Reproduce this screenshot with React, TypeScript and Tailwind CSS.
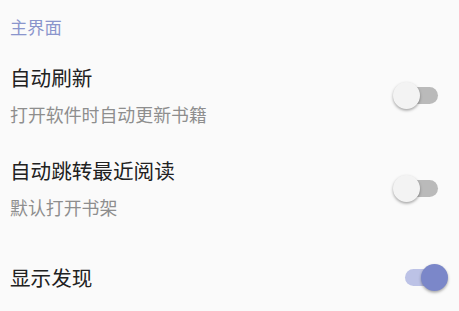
import React, { useState } from 'react';

type Pref = {
  key: string;
  title: string;
  summary?: string;
  on: boolean;
};

const initialPrefs: Pref[] = [
  { key: 'autoRefresh', title: '自动刷新', summary: '打开软件时自动更新书籍', on: false },
  { key: 'autoJump', title: '自动跳转最近阅读', summary: '默认打开书架', on: false },
  { key: 'showDiscover', title: '显示发现', on: true },
];

const Toggle: React.FC<{ on: boolean; onClick: () => void }> = ({ on, onClick }) => (
  <button type="button" onClick={onClick} className="relative w-[56px] h-[28px] shrink-0">
    <span
      className={`absolute left-[12px] top-[6px] w-[33px] h-[17px] rounded-full ${
        on ? 'bg-[#bcc2e6]' : 'bg-[#bababa]'
      }`}
    />
    <span
      className={`absolute top-[1px] w-[27px] h-[27px] rounded-full shadow-[0_1.5px_3px_rgba(0,0,0,0.35)] ${
        on ? 'left-[28px] bg-[#7b87c9]' : 'left-0 bg-[#f3f3f3]'
      }`}
    />
  </button>
);

export default function App() {
  const [prefs, setPrefs] = useState(initialPrefs);

  const toggle = (key: string) =>
    setPrefs((list) => list.map((p) => (p.key === key ? { ...p, on: !p.on } : p)));

  return (
    <div
      className="w-[459px] h-[311px] overflow-hidden bg-[#fafafa]"
      style={{ fontFamily: '"Noto Sans CJK SC", "Noto Sans", sans-serif' }}
    >
      <div className="h-[48px] pt-[17px] pl-[10px]">
        <div className="text-[17.3px] leading-[20px] text-[#8a95cc]">主界面</div>
      </div>

      {prefs.map((p) => (
        <div
          key={p.key}
          className={`flex items-center justify-between pl-[10px] pr-[10px] ${
            p.summary ? 'py-[15px]' : 'h-[86px]'
          }`}
        >
          <div className="flex flex-col">
            <div className="text-[20.6px] leading-[28px] text-[#212121]">{p.title}</div>
            {p.summary && (
              <div className="mt-[11px] text-[17.9px] leading-[24px] text-[#8e8e8e]">{p.summary}</div>
            )}
          </div>
          <Toggle on={p.on} onClick={() => toggle(p.key)} />
        </div>
      ))}
    </div>
  );
}
